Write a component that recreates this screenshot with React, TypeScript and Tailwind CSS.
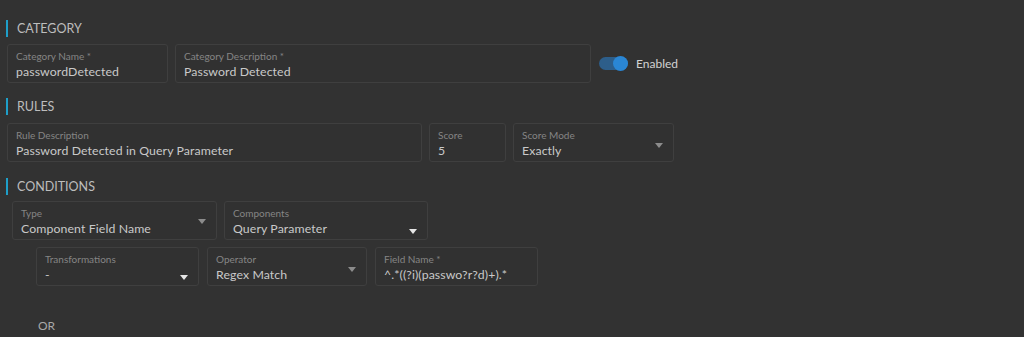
type FieldProps = {
  label: string;
  value: string;
  width: string;
  arrow?: "gray" | "white";
  arrowPos?: string;
};

const Caret = ({ color }: { color: "gray" | "white" }) => (
  <svg width="8" height="5" viewBox="0 0 8 5">
    <path d="M0 0 L8 0 L4 5 Z" fill={color === "white" ? "#e6e6e6" : "#8c8c8c"} />
  </svg>
);

const Field = ({ label, value, width, arrow, arrowPos }: FieldProps) => {
  return (
    <div
      className={`${width} h-[39px] shrink-0 rounded-[3px] border border-[#3f3f3f] bg-[#313131] pl-[8px] pr-[10px] pt-[5px] flex items-start`}
    >
      <div className="flex flex-col flex-1 min-w-0">
        <span className="text-[10px] leading-[12px] text-[#858585] whitespace-nowrap">{label}</span>
        <span className="text-[12.3px] leading-[18px] mt-[1px] text-[#c9c9c9] whitespace-nowrap tracking-[0.1px]">
          {value}
        </span>
      </div>
      {arrow && (
        <div className={arrowPos ?? "mt-[12px]"}>
          <Caret color={arrow} />
        </div>
      )}
    </div>
  );
};

const SectionHeader = ({ title, className }: { title: string; className?: string }) => (
  <div className={`flex items-center pl-[6px] h-[17px] ${className ?? ""}`}>
    <div className="w-[2px] h-[17px] bg-[#1e9fc9]" />
    <span className="ml-[9px] text-[12.5px] leading-[17px] text-[#bdbdbd]">{title}</span>
  </div>
);

const App = () => {
  return (
    <div
      className="w-[1024px] h-[337px] overflow-hidden bg-[#323232] pt-[20px]"
      style={{ fontFamily: "Lato, 'Open Sans', sans-serif" }}
    >
      <SectionHeader title="CATEGORY" />
      <div className="flex items-center gap-[7px] pl-[7px] mt-[7px]">
        <Field label="Category Name *" value="passwordDetected" width="w-[161px]" />
        <Field label="Category Description *" value="Password Detected" width="w-[416px]" />
        <div className="flex items-center ml-[1px] gap-[8px]">
          <div className="relative w-[29px] h-[13px]">
            <div className="w-[29px] h-[13px] rounded-full bg-[#2d5e8a]" />
            <div className="absolute right-0 top-[-1px] w-[15px] h-[15px] rounded-full bg-[#2a86d4]" />
          </div>
          <span className="text-[12px] text-[#d2d2d2]">Enabled</span>
        </div>
      </div>

      <SectionHeader title="RULES" className="mt-[15px]" />
      <div className="flex gap-[7px] pl-[7px] mt-[8px]">
        <Field label="Rule Description" value="Password Detected in Query Parameter" width="w-[415px]" />
        <Field label="Score" value="5" width="w-[77px]" />
        <Field label="Score Mode" value="Exactly" width="w-[161px]" arrow="gray" arrowPos="mt-[14px]" />
      </div>

      <SectionHeader title="CONDITIONS" className="mt-[16px]" />
      <div className="flex gap-[7px] pl-[12px] mt-[6px]">
        <Field label="Type" value="Component Field Name" width="w-[205px]" arrow="gray" arrowPos="mt-[12px]" />
        <Field label="Components" value="Query Parameter" width="w-[204px]" arrow="white" arrowPos="mt-[22px]" />
      </div>
      <div className="flex gap-[8px] pl-[36px] mt-[7px]">
        <Field label="Transformations" value="-" width="w-[163px]" arrow="white" arrowPos="mt-[22px]" />
        <Field label="Operator" value="Regex Match" width="w-[160px]" arrow="gray" arrowPos="mt-[14px]" />
        <Field label="Field Name *" value="^.*((?i)(passwo?r?d)+).*" width="w-[163px]" />
      </div>

      <div className="pl-[38px] mt-[31px] text-[12px] text-[#a8a8a8]">OR</div>
    </div>
  );
};

export default App;
